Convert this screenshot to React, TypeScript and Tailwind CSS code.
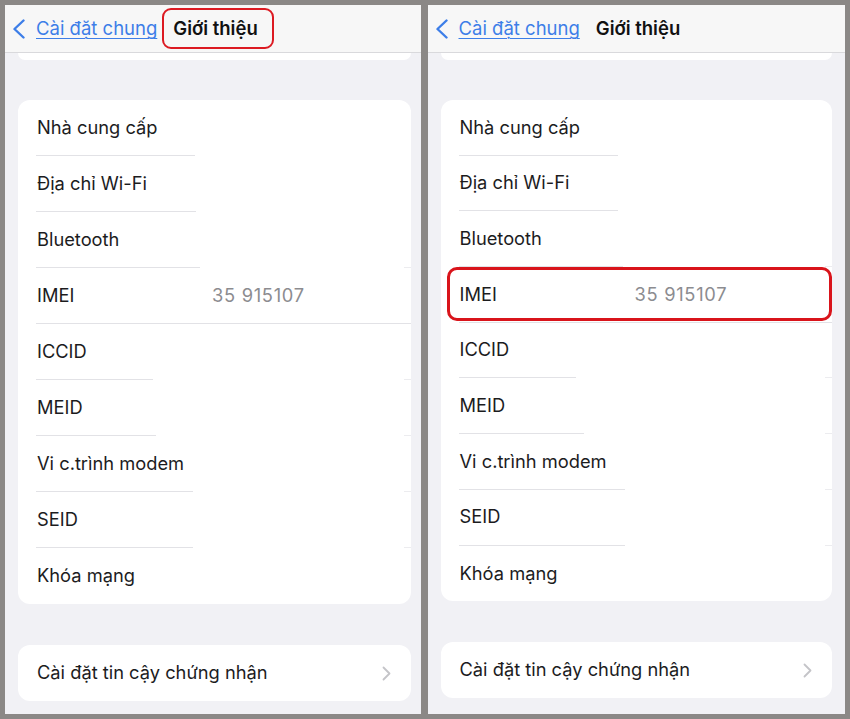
import React from "react";

type Row = {
    label: string;
    value?: string;
    sep?: number | "full";
    tail?: boolean;
};

type Props = {
    highlightTitle?: boolean;
    highlightImei?: boolean;
    rowHeight: string;
    cardMargin: string;
    rows: Row[];
    bottomCard: string;
};

const leftRows: Row[] = [
    { label: "Nhà cung cấp", sep: 159 },
    { label: "Địa chỉ Wi-Fi", sep: 160 },
    { label: "Bluetooth", sep: 164, tail: true },
    { label: "IMEI", value: "35 915107", sep: "full" },
    { label: "ICCID", sep: 117, tail: true },
    { label: "MEID", sep: 120, tail: true },
    { label: "Vi c.trình modem", sep: 157, tail: true },
    { label: "SEID", sep: 157, tail: true },
    { label: "Khóa mạng" },
];

const rightRows: Row[] = [
    { label: "Nhà cung cấp", sep: 159 },
    { label: "Địa chỉ Wi-Fi", sep: 159 },
    { label: "Bluetooth", sep: 164, tail: true },
    { label: "IMEI", value: "35 915107", sep: "full" },
    { label: "ICCID", sep: 117, tail: true },
    { label: "MEID", sep: 125, tail: true },
    { label: "Vi c.trình modem", sep: 166, tail: true },
    { label: "SEID", sep: 166, tail: true },
    { label: "Khóa mạng" },
];

const BackChevron = () => (
    <svg width="14" height="20" viewBox="0 0 14 20" fill="none">
        <path d="M11.5 1.5 L2.5 10 L11.5 18.5" stroke="#3d7ee8" strokeWidth="2.4" strokeLinecap="round" strokeLinejoin="round" />
    </svg>
);

const RowChevron = () => (
    <svg width="9" height="15" viewBox="0 0 9 15" fill="none">
        <path d="M1.5 1.5 L7.5 7.5 L1.5 13.5" stroke="#c4c4c8" strokeWidth="1.8" strokeLinecap="round" strokeLinejoin="round" />
    </svg>
);

const Panel: React.FC<Props> = props => {

    const { highlightTitle, highlightImei, rowHeight, cardMargin, rows, bottomCard } = props;

    return (
        <div className="flex flex-col h-[709px] bg-[#f1f1f5] overflow-hidden">

            <div className="h-[48px] shrink-0 flex items-center bg-[#f7f7f7] border-b border-[#d9d9dc] pl-[7px]">
                <BackChevron />
                <span className="ml-[10px] text-[18.5px] text-[#3d7ee8] underline decoration-1 underline-offset-[3px] leading-none">
                    Cài đặt chung
                </span>
                <span className="relative ml-[16px] text-[18.5px] font-semibold text-[#111] leading-none">
                    Giới thiệu
                    {highlightTitle && (
                        <span className="absolute -left-[11px] -right-[16px] -top-[11px] -bottom-[11px] border-[2.5px] border-[#dc1a22] rounded-[9px]" />
                    )}
                </span>
            </div>

            <div className={`${cardMargin} h-[7px] bg-white rounded-b-[10px] shrink-0`} />

            <div className={`mt-[40px] ${cardMargin} bg-white rounded-[12px]`}>
                {rows.map((row, i) => (
                    <div key={i} className={`relative flex flex-col ${rowHeight}`}>
                        <div className="flex-1 flex items-center pl-[19px]">
                            <span className="w-[175px] text-[18.3px] text-[#1c1c1e]">{row.label}</span>
                            {row.value && (
                                <span className="text-[18.3px] tracking-[0.7px] text-[#8c8c90]">{row.value}</span>
                            )}
                        </div>
                        {row.sep && (
                            <div className="flex h-px">
                                <div
                                    className={`ml-[18px] h-px bg-[#e2e2e6] ${row.sep === "full" ? "flex-1" : ""}`}
                                    style={row.sep === "full" ? undefined : { width: row.sep }}
                                />
                                {row.tail && <div className="ml-auto w-[7px] h-px bg-[#ececef]" />}
                            </div>
                        )}
                        {highlightImei && row.label === "IMEI" && (
                            <span className="absolute left-[6px] right-0 top-0 bottom-[2px] border-[3px] border-[#d9141b] rounded-[10px]" />
                        )}
                    </div>
                ))}
            </div>

            <div className={`mt-[41px] ${cardMargin} bg-white rounded-[12px] flex items-center pl-[19px] pr-[20px] ${rowHeight}`}>
                <span className="flex-1 text-[18.3px] text-[#1c1c1e]">{bottomCard}</span>
                <RowChevron />
            </div>
        </div>
    );
};

const App = () => {
    return (
        <div className="w-[850px] h-[719px] bg-[#8b8886] flex gap-[7px] p-[5px]" style={{ fontFamily: "Inter, 'Noto Sans', sans-serif" }}>
            <div className="w-[416px]">
                <Panel highlightTitle rowHeight="h-[56px]" cardMargin="ml-[13px] mr-[10px]" rows={leftRows} bottomCard="Cài đặt tin cậy chứng nhận" />
            </div>
            <div className="w-[418px]">
                <Panel highlightImei rowHeight="h-[55.7px]" cardMargin="mx-[13px]" rows={rightRows} bottomCard="Cài đặt tin cậy chứng nhận" />
            </div>
        </div>
    );
};

export default App;
